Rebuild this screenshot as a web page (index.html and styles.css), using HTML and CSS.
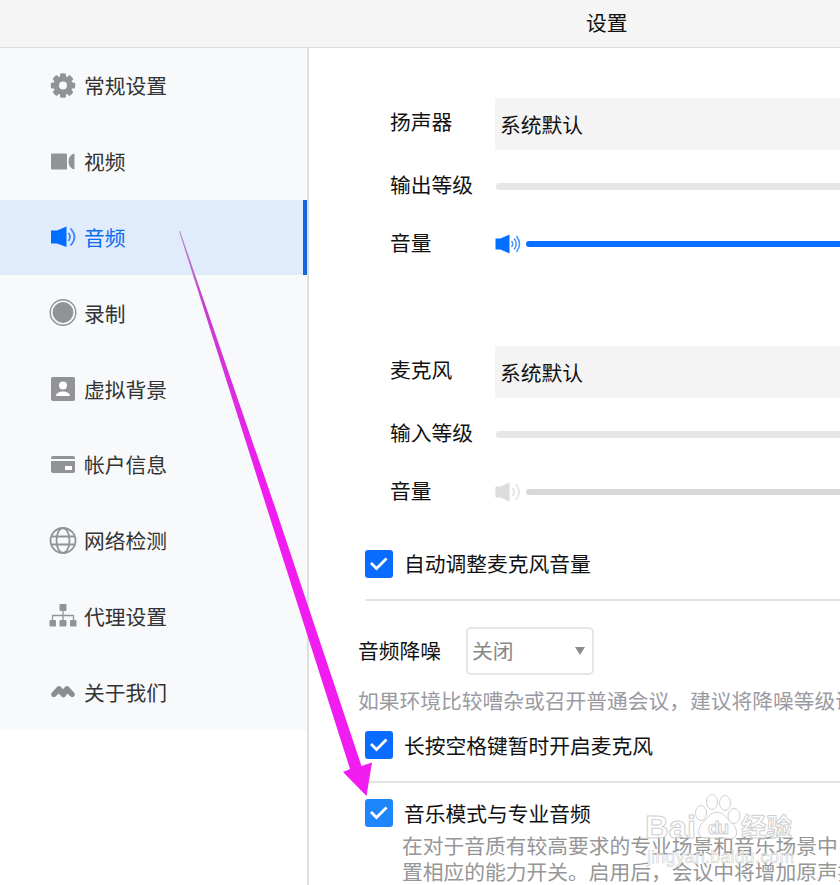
FILE: index.html
```html
<!DOCTYPE html>
<html lang="zh-CN">
<head>
    <meta charset="UTF-8">
    <meta name="viewport" content="width=device-width, initial-scale=1.0">
    <title>设置</title>
    <link rel="stylesheet" href="styles.css">
</head>
<body>

    <header class="titlebar"><h1>设置</h1></header>

    <div class="layout">
        <div class="sidebar">
            <ul class="menu">
                <li>
                    <svg class="icon" viewBox="0 0 28 28"><g fill="#919396"><circle cx="14" cy="13.500" r="9.600"/><g><rect x="11" y="1.300" width="6" height="24.400" rx="1.500"/><rect x="1.800" y="10.500" width="24.400" height="6" rx="1.500"/></g><g transform="rotate(45 14 13.500)"><rect x="11" y="1.300" width="6" height="24.400" rx="1.500"/><rect x="1.800" y="10.500" width="24.400" height="6" rx="1.500"/></g></g><circle cx="14" cy="13.500" r="4" fill="#f7f9fb"/></svg>
                    <span>常规设置</span>
                </li>
                <li>
                    <svg class="icon" viewBox="0 0 28 28" fill="#919396"><rect x="2" y="5.500" width="16" height="16" rx="1"/><path d="M25.500 5.500v16c-4-1-6-4-6-8s2-7 6-8z"/></svg>
                    <span>视频</span>
                </li>
                <li class="active">
                    <svg class="icon" viewBox="0 0 28 28"><path d="M2 7.500h6L17.500 3.500v20.500L8 20.500H2z" fill="#006fff"/><path d="M19.500 10q3 4 0 8M21.500 5.500q8 8.500 0 17" fill="none" stroke="#3b86f5" stroke-width="1.700"/></svg>
                    <span>音频</span>
                </li>
                <li>
                    <svg class="icon" viewBox="0 0 28 28"><circle cx="14" cy="13.500" r="12.800" fill="none" stroke="#919396" stroke-width="1.400"/><circle cx="14" cy="13.500" r="10.400" fill="#919396"/></svg>
                    <span>录制</span>
                </li>
                <li>
                    <svg class="icon" viewBox="0 0 28 28"><rect x="2" y="2" width="24" height="24" rx="2" fill="#919396"/><circle cx="14" cy="10.500" r="4" fill="#fff"/><path d="M7 21c0-6 14-6 14 0z" fill="#fff"/></svg>
                    <span>虚拟背景</span>
                </li>
                <li>
                    <svg class="icon" viewBox="0 0 28 28"><path d="M2 8V7q0-2 2-2h20q2 0 2 2v1zM2 10h24v10q0 2-2 2H4q-2 0-2-2z" fill="#919396"/><path d="M16 15h7v4h-7z" fill="#fff"/></svg>
                    <span>帐户信息</span>
                </li>
                <li>
                    <svg class="icon" viewBox="0 0 28 28" fill="none" stroke="#919396" stroke-width="1.800"><circle cx="14" cy="13.500" r="12.500"/><ellipse cx="14" cy="13.500" rx="6.500" ry="12.500"/><path d="M3 9.500h22M3 17.500h22"/></svg>
                    <span>网络检测</span>
                </li>
                <li>
                    <svg class="icon" viewBox="0 0 28 28"><path d="M14 8v10M3.500 18v-4.500h21V18" fill="none" stroke="#919396" stroke-width="1.300"/><g fill="#919396"><rect x="10.500" y="2" width="7" height="7" rx="1"/><rect x=".5" y="18" width="6.500" height="6.500" rx="1"/><rect x="10.500" y="18" width="7" height="6.500" rx="1"/><rect x="21" y="18" width="6.500" height="6.500" rx="1"/></g></svg>
                    <span>代理设置</span>
                </li>
                <li>
                    <svg class="icon" viewBox="0 0 28 28"><path d="M2.500 15L8.500 8.500Q10 7.500 11.500 8.500L14 11.200L16.500 8.500Q18 7.500 19.500 8.500L25.500 15Q26.500 17 25 18.500Q23 19.500 21.500 18.500L18.500 15.500L16 18.800Q14 20.500 12.500 18.500L9.800 15.500L6.500 18.500Q5 19.500 3 18.500Q1.500 17 2.500 15Z" fill="#8b8d90"/></svg>
                    <span>关于我们</span>
                </li>
            </ul>
        </div>

        <main class="content">
            <section class="device">
                <div class="row row-device">
                    <label>扬声器</label>
                    <div class="device-select">系统默认</div>
                </div>
                <div class="row row-level">
                    <label>输出等级</label>
                    <div class="level"></div>
                </div>
                <div class="row row-volume">
                    <label>音量</label>
                    <svg class="speaker" viewBox="0 0 28 28"><path d="M1.500 8.500h5L15.500 4.500v19l-9-4h-5z" fill="#006fff"/><path d="M17.500 11q2.500 3 0 6M20 8.500q4.500 5.500 0 11M22.500 6q6 8 0 16" fill="none" stroke="#4b91f5" stroke-width="1.500"/></svg>
                    <div class="volume"></div>
                </div>
            </section>

            <section class="device muted">
                <div class="row row-device">
                    <label>麦克风</label>
                    <div class="device-select">系统默认</div>
                </div>
                <div class="row row-level">
                    <label>输入等级</label>
                    <div class="level"></div>
                </div>
                <div class="row row-volume">
                    <label>音量</label>
                    <svg class="speaker" viewBox="0 0 28 28"><path d="M1.500 8.500h5L15.500 4.500v19l-9-4h-5z" fill="#dcdcde"/><path d="M18.500 10q3 4 0 8M22 6q6 8 0 16" fill="none" stroke="#e6e6e8" stroke-width="2"/></svg>
                    <div class="volume"></div>
                </div>
            </section>

            <div class="check check-auto">
                <svg class="box" viewBox="0 0 28 28"><rect width="28" height="28" rx="3" fill="#0a6cff"/><path d="M6 13l5.500 5.500L21.500 8.500" fill="none" stroke="#fff" stroke-width="2.800"/></svg>
                <span>自动调整麦克风音量</span>
            </div>

            <div class="noise">
                <label>音频降噪</label>
                <div class="dropdown"><span>关闭</span><i class="caret"></i></div>
            </div>
            <p class="hint">如果环境比较嘈杂或召开普通会议，建议将降噪等级调</p>

            <div class="check check-space">
                <svg class="box" viewBox="0 0 28 28"><rect width="28" height="28" rx="3" fill="#0a6cff"/><path d="M6 13l5.500 5.500L21.500 8.500" fill="none" stroke="#fff" stroke-width="2.800"/></svg>
                <span>长按空格键暂时开启麦克风</span>
            </div>

            <div class="check check-music">
                <svg class="box" viewBox="0 0 28 28"><rect width="28" height="28" rx="3" fill="#1e86fa"/><path d="M6 13l5.500 5.500L21.500 8.500" fill="none" stroke="#fff" stroke-width="2.800"/></svg>
                <span>音乐模式与专业音频</span>
            </div>
            <p class="desc">在对于音质有较高要求的专业场景和音乐场景中<br>置相应的能力开关。启用后，会议中将增加原声按</p>
        </main>
    </div>

    <svg class="watermark" viewBox="0 0 160 80">
        <g fill="#fff" fill-opacity=".55" stroke="#d0d0d0" stroke-width="1">
            <path d="M55 39C57 32 62 30 65 26C69 21 77 21 81 26C84 30 89 32 92 39C95 47 88 50 82 48H64C58 49 53 46 55 39Z"/>
            <ellipse cx="57" cy="23" rx="5.500" ry="7.500"/>
            <ellipse cx="68" cy="12" rx="5.500" ry="7.500"/>
            <ellipse cx="81" cy="13" rx="5.500" ry="7.500"/>
            <ellipse cx="90" cy="26" rx="6" ry="7.500"/>
            <text class="wm-bold" x="1" y="48" font-size="32" textLength="51" lengthAdjust="spacingAndGlyphs">Bai</text>
            <text class="wm-bold" x="64" y="44" font-size="19" textLength="21">du</text>
            <text class="wm-cjk" x="97" y="46" font-size="25.500">经验</text>
            <text class="wm-url" x="3" y="73" font-size="17.500" stroke-width=".6" textLength="147">jingyan.baidu.com</text>
        </g>
    </svg>

    <svg class="arrow" viewBox="0 0 840 885">
        <defs>
            <linearGradient id="arrowFill" gradientUnits="userSpaceOnUse" x1="180" y1="230" x2="270" y2="480">
                <stop offset="0" stop-color="#b58ac8"/>
                <stop offset=".3" stop-color="#c43fd0"/>
                <stop offset="1" stop-color="#f01cf0"/>
            </linearGradient>
        </defs>
        <path d="M179 231L267.500 510L350 769L343 772L366.500 796L372 762.500L361.500 766L276 510L180 231Z" fill="url(#arrowFill)"/>
    </svg>

</body>
</html>
```
FILE: styles.css
```css
* {
    box-sizing: border-box;
}

body {
    margin: 0;
    height: 885px;
    overflow: hidden;
    position: relative;
    background: #fff;
    color: #111;
    font-family: "Noto Sans CJK SC", sans-serif;
    font-size: 20.75px;
    line-height: 30px;
}

h1, p, ul {
    margin: 0;
    padding: 0;
    font-size: inherit;
    font-weight: normal;
}

.titlebar {
    height: 48px;
    padding: 7px 0 0 586px;
    background: #f5f5f5;
    border-bottom: 1px solid #dcdcdc;
}

.layout {
    display: flex;
    height: 837px;
}

.sidebar {
    width: 309px;
    border-right: 2px solid #dedfe1;
}

.menu {
    list-style: none;
    background: #f7f9fb;
}

.menu li {
    display: flex;
    align-items: center;
    gap: 7px;
    height: 75.8px;
    padding-left: 49px;
    color: #333;
}

.menu span {
    padding-bottom: 1px;
}

.menu li.active {
    background: #e0ebfc;
    border-right: 4px solid #1766dc;
    color: #0a6cf0;
}

.icon {
    width: 28px;
    height: 28px;
}

.content {
    flex: 1;
    min-width: 0;
    overflow: hidden;
    padding: 50px 0 0 49px;
}

.device {
    height: 248px;
    padding-left: 32px;
}

.device.muted {
    height: 200px;
}

.row {
    display: flex;
    align-items: center;
}

.row label {
    width: 105px;
    padding-bottom: 4px;
}

.row-device label {
    padding-bottom: 6px;
}

.row-level {
    height: 71px;
}

.row-volume {
    height: 46px;
}

.device-select {
    flex: 1;
    height: 52px;
    padding: 11px 5px;
    background: #f4f4f4;
}

.level {
    flex: 1;
    height: 7px;
    margin: 2px 0 0 1px;
    background: #e7e7e7;
    border-radius: 3px 0 0 3px;
}

.speaker {
    width: 28px;
    height: 28px;
    margin-left: -1px;
}

.volume {
    flex: 1;
    height: 6px;
    margin-left: 4px;
    background: #0a6fff;
    border-radius: 3px 0 0 3px;
}

.muted .volume {
    background: #d8d8d8;
}

.check {
    display: flex;
    align-items: center;
    gap: 11px;
    margin-left: 7px;
}

.check span {
    padding-bottom: 1px;
}

.box {
    width: 28px;
    height: 28px;
}

.check-auto {
    height: 55px;
    padding-bottom: 18px;
    border-bottom: 2px solid #e3e3e3;
}

.noise {
    display: flex;
    align-items: center;
    gap: 25px;
    margin-top: 26px;
}

.noise label,
.noise span {
    padding-bottom: 3px;
}

.dropdown {
    display: flex;
    align-items: center;
    justify-content: space-between;
    width: 128px;
    height: 48px;
    padding: 0 7px 0 4px;
    border: 2px solid #e6e6e6;
    border-radius: 5px;
    color: #888;
}

.caret {
    border: 5px solid transparent;
    border-top: 8px solid #8c8c8c;
    border-bottom: 0;
}

.hint {
    margin-top: 10px;
    color: #9a9aa3;
    white-space: nowrap;
}

.check-space {
    height: 68px;
    padding-bottom: 6px;
    border-bottom: 2px solid #e3e3e3;
}

.check-music {
    height: 30px;
    margin-top: 15px;
}

.desc {
    margin: 4px 0 0 44px;
    color: #969696;
    line-height: 26px;
    white-space: nowrap;
}

/* overlays */
.watermark {
    position: absolute;
    left: 644px;
    top: 790px;
    width: 160px;
    height: 80px;
}

.wm-bold {
    font-family: "Liberation Sans", Arial, sans-serif;
    font-weight: bold;
}

.wm-cjk {
    font-family: "Noto Sans CJK SC", sans-serif;
    font-weight: bold;
}

.wm-url {
    font-family: "Liberation Sans", Arial, sans-serif;
}

.arrow {
    position: absolute;
    left: 0;
    top: 0;
    width: 840px;
    height: 885px;
    pointer-events: none;
}
```
